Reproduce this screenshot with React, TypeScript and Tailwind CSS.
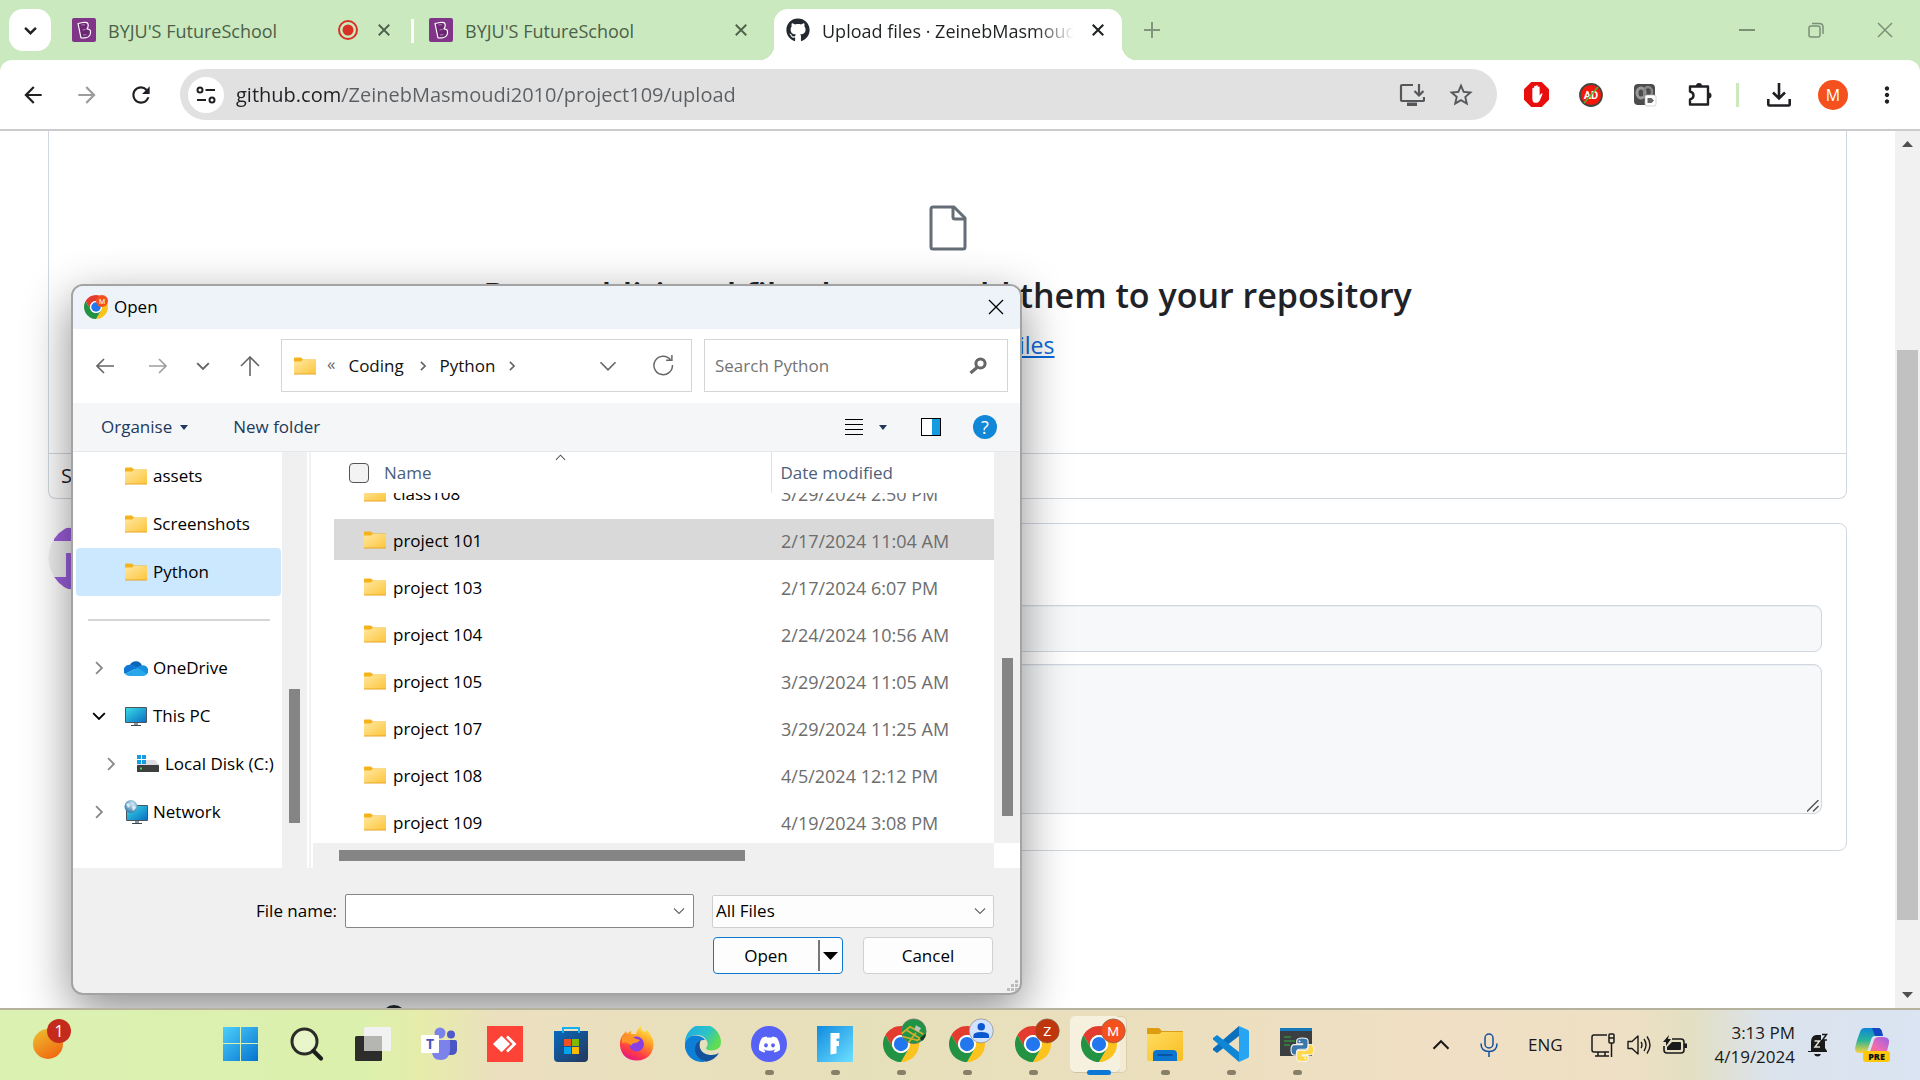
import React from "react";
import { FaDiscord, FaGithub } from "react-icons/fa";
import {
  MdArrowBack,
  MdArrowForward,
  MdRefresh,
  MdStarBorder,
  MdMoreVert,
} from "react-icons/md";

const ui = "font-['Open_Sans','Noto_Sans',sans-serif]";

/* ---------- Icons ---------- */

function Cross({ size, stroke = 1 }: { size: number; stroke?: number }) {
  return (
    <svg width={size} height={size} viewBox="0 0 16 16" fill="none" stroke="currentColor" strokeWidth={stroke} aria-hidden="true">
      <path d="M1 1 15 15M15 1 1 15" />
    </svg>
  );
}

function Chevron({ dir, size = 12, stroke = 1.5 }: { dir: "down" | "up" | "right"; size?: number; stroke?: number }) {
  const d = dir === "down" ? "M1 3.5 6 8.5 11 3.5" : dir === "up" ? "M1 8.5 6 3.5 11 8.5" : "M3.5 1 8.5 6 3.5 11";
  return (
    <svg width={size} height={size} viewBox="0 0 12 12" fill="none" stroke="currentColor" strokeWidth={stroke} aria-hidden="true" className="shrink-0">
      <path d={d} />
    </svg>
  );
}

function Caret({ width, height }: { width: number; height: number }) {
  return (
    <svg width={width} height={height} viewBox="0 0 10 6" preserveAspectRatio="none" fill="currentColor" aria-hidden="true">
      <path d="M0 0H10L5 6Z" />
    </svg>
  );
}

function ByjuIcon() {
  return (
    <svg width="24" height="24" viewBox="0 0 24 24" aria-hidden="true" className="shrink-0">
      <rect width="24" height="24" rx="2" fill="#813588" />
      <path
        d="M6 5.5 11 4.5Q16 3.500 16.200 7Q16.400 9.500 15 10.800Q19 11 18.500 15Q18 19.500 13 19.800L9 20Z"
        fill="#6b2772"
        stroke="#fff"
        strokeWidth="1.200"
        strokeLinejoin="round"
      />
      <path d="M9.500 7 13 6.700M11 17 14.500 16.700M10.500 12 13.500 11.500" stroke="#c79acb" strokeWidth=".8" />
    </svg>
  );
}

function Chrome({ size, badge }: { size: number; badge?: React.ReactNode }) {
  return (
    <svg width={size} height={size} viewBox="0 0 48 48" className="shrink-0 overflow-visible" aria-hidden="true">
      <path fill="#e33b2e" d="M24 12h20.780A24 24 0 0 0 3.216 12.002L13.608 30A12 12 0 0 1 24 12z" />
      <path fill="#fcc31e" d="M34.391 30.003 24 48a24 24 0 0 0 20.780-36.002H24A12 12 0 0 1 34.391 30.003z" />
      <path fill="#229342" d="M13.609 30.003 3.218 12.006A24 24 0 0 0 24.002 48L34.393 30.003a12 12 0 0 1-20.784 0z" />
      <circle cx="24" cy="24" r="12" fill="#fff" />
      <circle cx="24" cy="24" r="9.500" fill="#2377ee" />
      {badge}
    </svg>
  );
}

function LetterBadge({ letter, color }: { letter: string; color: string }) {
  return (
    <g>
      <circle cx="43" cy="6.500" r="16" fill={color} stroke="#8a5f4c" strokeWidth="1" />
      <text x="43" y="13" textAnchor="middle" fontSize="18" fill="#fff" fontFamily="Roboto, sans-serif">
        {letter}
      </text>
    </g>
  );
}

function FolderIcon() {
  return (
    <svg width="22" height="18" viewBox="0 0 22 18" aria-hidden="true" className="shrink-0">
      <defs>
        <linearGradient id="folder" x1="0" y1="0" x2="1" y2="1">
          <stop offset="0" stopColor="#ffe7a0" />
          <stop offset="1" stopColor="#fdc63c" />
        </linearGradient>
      </defs>
      <path d="M0 1.500Q0 .5 1 .5H7L9 2.500H22V8H0z" fill="#f6b21b" />
      <path d="M0 4.500H7L8.500 3H22V17H0z" fill="url(#folder)" />
      <path d="M0 16.500H22V17.500H0z" fill="#e9a524" />
    </svg>
  );
}

function OneDriveIcon() {
  return (
    <svg width="24" height="16" viewBox="0 0 24 16" aria-hidden="true" className="shrink-0">
      <path d="M6 5A6.500 6.500 0 0 1 18 5.500L12 10z" fill="#0a64b8" />
      <path d="M6 4.800A5.600 5.600 0 0 0 1 14L14 7.500Q10 4.200 6 4.800z" fill="#0f78d4" />
      <path d="M18 5.500A5.200 5.200 0 0 1 22.500 14.500L12.500 8Q15 5.300 18 5.500z" fill="#1490df" />
      <path d="M1 14Q3 16 5.500 16H19Q21.500 16 23 14L13.500 7.800z" fill="#28a8ea" />
    </svg>
  );
}

function MonitorIcon({ globe = false }: { globe?: boolean }) {
  return (
    <svg width="24" height="24" viewBox="0 0 24 24" aria-hidden="true" className="shrink-0">
      <defs>
        <linearGradient id="screen" x1="0" y1="0" x2="1" y2="1">
          <stop offset="0" stopColor="#38dbe6" />
          <stop offset="1" stopColor="#0b6fc4" />
        </linearGradient>
        <radialGradient id="globe" cx=".6" cy=".3" r=".8">
          <stop offset="0" stopColor="#cfe9f7" />
          <stop offset="1" stopColor="#256fa3" />
        </radialGradient>
      </defs>
      <g transform={globe ? "translate(1 3)" : "translate(0 1)"}>
        <rect x="1" y="2" width="22" height="16" rx="1" fill="#4a5560" />
        <rect x="2" y="3" width="20" height="14" fill="url(#screen)" />
        <path d="M10 18h4v2h-4z" fill="#8b959e" />
        <path d="M7 20h10v1H7z" fill="#3c464e" />
      </g>
      {globe && (
        <g>
          <circle cx="7" cy="6.500" r="6.500" fill="url(#globe)" />
          <path d="M2 4 5 3 6 6 4 8zM8 7 11 5 12 8 9 11z" fill="#f0f8fb" opacity=".8" />
        </g>
      )}
    </svg>
  );
}

function DiskIcon() {
  return (
    <svg width="24" height="18" viewBox="0 0 24 18" aria-hidden="true" className="shrink-0">
      <path d="M5 5H19L23 10H1z" fill="#dcdee1" />
      <rect x="1" y="10" width="22" height="7" rx=".5" fill="#3d3f3e" />
      <rect x="4" y="12.500" width="2" height="2" fill="#3be14a" />
      <path d="M1 0h4v4H1zM6 0h4v4H6zM1 5h4v4H1zM6 5h4v4H6z" fill="#159de3" />
    </svg>
  );
}

/* ---------- Browser chrome ---------- */

function Tab({ title, recording = false }: { title: string; recording?: boolean }) {
  return (
    <div className="flex h-[42px] w-[348px] items-center px-3 text-[#4d5f49]">
      <ByjuIcon />
      <span className="ml-3 flex-1 truncate pt-px">{title}</span>
      {recording && (
        <svg width="22" height="22" viewBox="0 0 22 22" className="mr-[19px]" aria-label="Recording">
          <circle cx="11" cy="11" r="9" fill="none" stroke="#d93025" strokeWidth="2" />
          <circle cx="11" cy="11" r="5.500" fill="#d93025" />
        </svg>
      )}
      <button aria-label="Close tab" className="mr-1.5">
        <Cross size={12} stroke={2.4} />
      </button>
    </div>
  );
}

function TabStrip() {
  return (
    <div className="flex h-[60px] items-start bg-[#cae9bf] pt-[9px] pl-[9px] text-lg">
      <button aria-label="Search tabs" className="mr-[9px] flex h-[42px] w-[42px] items-center justify-center rounded-[14px] bg-white text-[#1f2320]">
        <Chevron dir="down" size={13} stroke={2.200} />
      </button>
      <Tab title="BYJU'S FutureSchool" recording />
      <span className="mx-[3px] mt-[10px] h-6 w-[3px] bg-white" />
      <Tab title="BYJU'S FutureSchool" />
      <div className="relative ml-[9px] flex h-[51px] w-[348px] items-start rounded-t-[14px] bg-white text-[#1f2320]">
        <span className="absolute bottom-0 -left-[14px] h-[14px] w-[14px] bg-[radial-gradient(circle_at_0_0,transparent_14px,white_14px)]" />
        <span className="absolute -right-[14px] bottom-0 h-[14px] w-[14px] bg-[radial-gradient(circle_at_100%_0,transparent_14px,white_14px)]" />
        <div className="flex h-[42px] w-full items-center px-3">
          <FaGithub size={24} className="shrink-0 text-[#24292f]" />
          <span className="mr-[18px] ml-3 flex-1 overflow-hidden mask-r-from-85% pt-px whitespace-nowrap">
            Upload files · ZeinebMasmoudi
          </span>
          <button aria-label="Close tab" className="mr-1.5">
            <Cross size={12} stroke={2.8} />
          </button>
        </div>
      </div>
      <button aria-label="New tab" className="ml-[22px] mt-[13px] text-[#82957c]">
        <svg width="16" height="16" viewBox="0 0 16 16" fill="none" stroke="currentColor" strokeWidth="2">
          <path d="M8 0V16M0 8H16" />
        </svg>
      </button>
      <div className="ml-auto flex h-[42px] items-center gap-[53px] pr-[27px] text-[#7c8f77]">
        <button aria-label="Minimize">
          <svg width="16" height="16" viewBox="0 0 16 16" stroke="currentColor" strokeWidth="2">
            <path d="M0 8H16" />
          </svg>
        </button>
        <button aria-label="Restore">
          <svg width="16" height="16" viewBox="0 0 16 16" fill="none" stroke="currentColor" strokeWidth="1.500">
            <rect x="1" y="4" width="11" height="11" rx="2" />
            <path d="M4 1.500H11Q15 1.500 15 5V12" />
          </svg>
        </button>
        <button aria-label="Close window">
          <Cross size={16} stroke={1.5} />
        </button>
      </div>
    </div>
  );
}

function Toolbar() {
  return (
    <div className="bg-[#cae9bf]">
      <div className="flex h-[71px] items-center rounded-t-[12px] border-b-2 border-[#cbcbcd] bg-white px-5 text-[#1f2023]">
        <button aria-label="Back">
          <MdArrowBack size={26} />
        </button>
        <button aria-label="Forward" className="ml-7 text-[#9c9c9e]">
          <MdArrowForward size={26} />
        </button>
        <button aria-label="Reload" className="ml-7">
          <MdRefresh size={26} />
        </button>
        <div className="ml-[26px] flex h-[51px] flex-1 items-center rounded-full bg-[#e1e1e1] pr-[22px] pl-2">
          <button aria-label="Site information" className="flex h-9 w-9 items-center justify-center rounded-full bg-white">
            <svg width="20" height="18" viewBox="0 0 20 18" fill="none" stroke="currentColor" strokeWidth="2">
              <circle cx="4" cy="4" r="2.500" />
              <path d="M9.500 4H19M1 14H10" />
              <circle cx="16" cy="14" r="2.500" />
            </svg>
          </button>
          <input
            aria-label="Address"
            className="ml-3 min-w-0 flex-1 bg-[linear-gradient(90deg,#1f2023_106px,#5c5f62_106px)] bg-clip-text text-[20px] text-transparent outline-none"
            defaultValue="github.com/ZeinebMasmoudi2010/project109/upload"
          />
          <button aria-label="Install app" className="text-[#55575a]">
            <svg width="26" height="24" viewBox="0 0 26 24" fill="none" stroke="currentColor" strokeWidth="2.200">
              <path d="M14 2H3Q2 2 2 3V17Q2 18 3 18H24Q25 18 25 17V14" />
              <path d="M20 1V12M15.500 8 20 12.500 24.500 8" />
              <path d="M8 19.500H18V23H8z" fill="currentColor" stroke="none" />
            </svg>
          </button>
          <button aria-label="Bookmark" className="ml-[22px] text-[#55575a]">
            <MdStarBorder size={28} />
          </button>
        </div>
        <div className="ml-[27px] flex items-center gap-[30px]">
          <button aria-label="Ad blocker">
            <svg width="25" height="25" viewBox="0 0 24 24">
              <path d="M7 0H17L24 7V17L17 24H7L0 17V7z" fill="#e80e0e" />
              <path
                d="M8 12V6.500Q8 5.500 8.800 5.500T9.700 6.500V4.500Q9.700 3.500 10.600 3.500T11.500 4.500V4Q11.500 3 12.400 3T13.300 4V5Q13.300 4.200 14.200 4.200T15 5.200V13L16.500 11Q17.500 10.500 17.800 11.500L15.500 17Q14.500 20 11.500 20Q8 20 8 16z"
                fill="#fff"
              />
            </svg>
          </button>
          <button aria-label="AD extension">
            <svg width="24" height="24" viewBox="0 0 24 24">
              <circle cx="12" cy="12" r="11" fill="#f3170c" stroke="#47443f" strokeWidth="1.800" />
              <text x="12" y="16" textAnchor="middle" fontSize="11" fontWeight="700" fill="#fff" fontFamily="Roboto, sans-serif">
                AD
              </text>
              <path d="M5 20 19 4" stroke="#3fbf3f" strokeWidth="1.300" />
            </svg>
          </button>
          <button aria-label="Screen capture extension">
            <svg width="24" height="24" viewBox="0 0 24 24">
              <rect x="1" y="1" width="21" height="21" rx="4" fill="#4c4c4c" />
              <ellipse cx="8" cy="10" rx="4" ry="5" fill="none" stroke="#999" strokeWidth="3" />
              <ellipse cx="15" cy="9" rx="4" ry="5" fill="none" stroke="#888" strokeWidth="2.500" />
              <rect x="12" y="12" width="11" height="11" rx="2" fill="#fff" stroke="#bbb" strokeWidth=".6" />
              <path d="M14.500 15H18.500L21 17.500 18.500 20H14.500z" fill="#666" />
            </svg>
          </button>
          <button aria-label="Extensions">
            <svg width="26" height="26" viewBox="0 0 26 26" fill="none" stroke="currentColor" strokeWidth="2.400" strokeLinejoin="round">
              <path d="M3 4.500H21V22.500H3V17.500Q6.500 16.500 6.500 13.500T3 9.500z" />
              <path d="M9 4A3 3 0 0 1 15 4zM21.500 10.500A3 3 0 0 1 21.500 16.500z" fill="currentColor" stroke="none" />
            </svg>
          </button>
        </div>
        <span className="ml-[23px] h-6 w-[3px] bg-[#cae9bf]" />
        <button aria-label="Downloads" className="ml-7">
          <svg width="24" height="24" viewBox="0 0 24 24" fill="none" stroke="currentColor" strokeWidth="2.600">
            <path d="M12 0V15M6 9.500 12 15.500 18 9.500M1.300 16V21.500Q1.300 22.500 2.300 22.500H21.700Q22.700 22.500 22.700 21.500V16" />
          </svg>
        </button>
        <button className="ml-[27px] flex h-[30px] w-[30px] items-center justify-center rounded-full bg-[#f4511e] text-base text-white">
          M
        </button>
        <button aria-label="Menu" className="ml-[26px]">
          <MdMoreVert size={26} />
        </button>
      </div>
    </div>
  );
}

/* ---------- Page ---------- */

function Page() {
  return (
    <main className="flex min-h-0 flex-1 bg-white text-[#1f2328]">
      <div className="flex min-w-0 flex-1 flex-col overflow-hidden px-12">
        <section className="shrink-0 rounded-b-lg border border-t-0 border-[#d0d7de]">
          <div className="flex h-[323px] flex-col items-center border-b border-[#d0d7de] pt-[74px]">
            <svg width="38" height="46" viewBox="0 0 38 46" fill="none" stroke="#656d76" strokeWidth="3" strokeLinejoin="round" aria-hidden="true">
              <path d="M4 2H25L36 13V42Q36 44 34 44H4Q2 44 2 42V4Q2 2 4 2z" />
              <path d="M24 2V12Q24 14 26 14H36" />
            </svg>
            <h3 className="mt-[20px] text-[34px] leading-[48px] font-semibold whitespace-nowrap">
              Drag additional files here to add them to your repository
            </h3>
            <p className="mt-[10px] text-[23px] leading-[32px] text-[#656d76]">
              Or{" "}
              <a href="#choose" className="text-[#0969da] underline">
                choose your files
              </a>
            </p>
          </div>
          <p className="h-[44px] px-3 text-[20px] leading-[44px]">S</p>
        </section>
        <form className="mt-6 flex shrink-0 items-start">
          <svg width="66" height="70" viewBox="0 0 66 70" className="shrink-0" aria-hidden="true">
            <clipPath id="avatar">
              <circle cx="35" cy="35" r="34.500" />
            </clipPath>
            <g clipPath="url(#avatar)">
              <rect width="70" height="70" fill="#f0f0f0" />
              <path d="M6 5H60V18H6zM18 30H48V66H6V54H18z" fill="#9a5fdb" />
            </g>
          </svg>
          <div className="ml-6 flex flex-1 flex-col rounded-lg border border-[#d0d7de] px-6 pt-[81px] pb-[36px]">
            <input
              aria-label="Commit summary"
              className="h-[47px] rounded-lg border border-[#d0d7de] bg-[#f6f8fa] px-4 text-lg shadow-[inset_0_1px_0_rgba(208,215,222,0.3)]"
            />
            <div className="relative mt-3 flex">
              <textarea
                aria-label="Extended description"
                className="h-[150px] flex-1 resize-none rounded-lg border border-[#d0d7de] bg-[#f6f8fa] p-4 text-lg shadow-[inset_0_1px_0_rgba(208,215,222,0.3)]"
              />
              <svg width="12" height="12" viewBox="0 0 12 12" className="absolute right-[3px] bottom-[2px]" stroke="#4f5255" strokeWidth="1.400" aria-hidden="true">
                <path d="M0 11.500 11.500 0M6 11.500 11.500 6" />
              </svg>
            </div>
          </div>
        </form>
        <div className="mt-[154px] ml-[334px] h-6 w-6 shrink-0 rounded-full bg-[#24292f]" />
      </div>
      <div className="flex w-[25px] flex-col items-center bg-[#f1f1f1] py-[10px] text-[#505050]" aria-hidden="true">
        <span className="flex rotate-180">
          <Caret width={11} height={6} />
        </span>
        <span className="mt-[203px] mb-auto h-[570px] w-[21px] bg-[#c1c1c1]" />
        <Caret width={11} height={6} />
      </div>
    </main>
  );
}

/* ---------- File dialog ---------- */

const files = [
  ["class108", "3/29/2024 2:50 PM"],
  ["project 101", "2/17/2024 11:04 AM"],
  ["project 103", "2/17/2024 6:07 PM"],
  ["project 104", "2/24/2024 10:56 AM"],
  ["project 105", "3/29/2024 11:05 AM"],
  ["project 107", "3/29/2024 11:25 AM"],
  ["project 108", "4/5/2024 12:12 PM"],
  ["project 109", "4/19/2024 3:08 PM"],
];

function TreeItem({
  label,
  icon,
  state,
  selected = false,
  nested = false,
}: {
  label: string;
  icon: React.ReactNode;
  state?: "open" | "closed";
  selected?: boolean;
  nested?: boolean;
}) {
  return (
    <li
      className={`mr-px ml-[3px] flex h-12 items-center rounded-sm whitespace-nowrap ${selected ? "bg-[#cce8ff]" : ""} ${nested ? "pl-7" : "pl-4"}`}
    >
      <span className="flex w-[14px] justify-center">
        {state === "open" && <Chevron dir="down" size={14} stroke={1.6} />}
        {state === "closed" && (
          <span className="text-[#8b8b8b]">
            <Chevron dir="right" size={14} stroke={1.6} />
          </span>
        )}
      </span>
      <span className="ml-[18px] flex w-6 justify-center">{icon}</span>
      <span className="ml-[5px]">{label}</span>
    </li>
  );
}

function FileDialog() {
  return (
    <div
      role="dialog"
      aria-label="Open"
      className="absolute top-[284px] left-[71px] flex w-[951px] flex-col overflow-hidden rounded-[12px] border-2 border-[#a3a3a3] bg-[#f0f0f0] text-[17px] text-black shadow-[0_16px_48px_rgba(0,0,0,0.45)]"
    >
      <div className="flex h-[43px] items-center bg-[#edf3f9] pr-4 pb-0.5 pl-[11px]">
        <Chrome
          size={24}
          badge={
            <g>
              <circle cx="36" cy="12" r="12" fill="#f4511e" />
              <text x="36" y="17" textAnchor="middle" fontSize="14" fill="#fff" fontFamily="Roboto, sans-serif">
                M
              </text>
            </g>
          }
        />
        <span className="ml-1.5 flex-1">Open</span>
        <button aria-label="Close">
          <Cross size={16} stroke={1.300} />
        </button>
      </div>

      <div className="flex h-[74px] items-center bg-white pr-3 pb-px text-[#666]">
        <button aria-label="Back" className="ml-[23px]">
          <svg width="18" height="16" viewBox="0 0 18 16" fill="none" stroke="currentColor" strokeWidth="1.600">
            <path d="M18 8H1M8 1 1 8 8 15" />
          </svg>
        </button>
        <button aria-label="Forward" className="ml-[35px] text-[#9f9f9f]">
          <svg width="18" height="16" viewBox="0 0 18 16" fill="none" stroke="currentColor" strokeWidth="1.600">
            <path d="M0 8H17M10 1 17 8 10 15" />
          </svg>
        </button>
        <button aria-label="Recent locations" className="ml-[29px]">
          <Chevron dir="down" size={14} stroke={1.700} />
        </button>
        <button aria-label="Up" className="ml-[30px]">
          <svg width="20" height="20" viewBox="0 0 20 20" fill="none" stroke="currentColor" strokeWidth="1.600">
            <path d="M10 20V1M1 10 10 1 19 10" />
          </svg>
        </button>
        <div className="ml-[21px] flex h-[53px] w-[411px] items-center border border-[#d5d5d5] pl-3">
          <FolderIcon />
          <span className="ml-[11px] pb-1">«</span>
          <span className="ml-[13px] w-[70px] text-[#111]">Coding</span>
          <Chevron dir="right" size={10} stroke={2} />
          <span className="ml-[11px] w-[62px] text-[#111]">Python</span>
          <span className="ml-1.5">
            <Chevron dir="right" size={10} stroke={2} />
          </span>
          <button aria-label="Previous locations" className="ml-auto">
            <Chevron dir="down" size={18} stroke={1.1} />
          </button>
          <button aria-label="Refresh" className="mr-[17px] ml-9">
            <svg width="21" height="21" viewBox="0 0 20 20" fill="none" stroke="currentColor" strokeWidth="1.400">
              <path d="M18.500 9.500A8.800 8.800 0 1 1 16.500 4.300M12.500 5H18V0" />
            </svg>
          </button>
        </div>
        <div className="ml-3 flex h-[53px] flex-1 items-center border border-[#d5d5d5] pr-[20px] pl-[10px]">
          <input aria-label="Search" placeholder="Search Python" className="min-w-0 flex-1 outline-none placeholder:text-[#747474]" />
          <svg width="18" height="18" viewBox="0 0 18 18" fill="none" stroke="currentColor" aria-hidden="true">
            <circle cx="11.500" cy="6.500" r="4.600" strokeWidth="3" />
            <path d="M8 10.500 1.500 16" strokeWidth="3" />
          </svg>
        </div>
      </div>

      <div className="flex h-[49px] items-center border-b border-[#e5e7e9] bg-[#f4f6f8] pr-[23px] pl-7 text-[#1e395b]">
        <button className="flex items-center gap-2">
          Organise
          <Caret width={8} height={5} />
        </button>
        <button className="ml-[45px] flex-1 text-left">New folder</button>
        <button aria-label="Change view" className="text-black">
          <svg width="18" height="18" viewBox="0 0 18 18" stroke="currentColor" strokeWidth="1">
            <path d="M0 1.500H18M0 6.500H18M0 11.500H18M0 16.500H18" />
          </svg>
        </button>
        <button aria-label="View options" className="ml-4">
          <Caret width={8} height={5} />
        </button>
        <button aria-label="Preview pane" className="ml-[34px]">
          <svg width="20" height="18" viewBox="0 0 20 18">
            <rect x=".5" y=".5" width="19" height="17" fill="#fff" stroke="#000" />
            <rect x="11" y="1" width="8" height="16" fill="#159be2" />
          </svg>
        </button>
        <button aria-label="Help" className="ml-8 flex h-6 w-6 items-center justify-center rounded-full bg-[#1187d8] text-lg text-white">
          ?
        </button>
      </div>

      <div className="flex h-[416px]">
        <nav className="w-[209px] bg-white" aria-label="Locations">
          <ul>
            <TreeItem label="assets" icon={<FolderIcon />} />
            <TreeItem label="Screenshots" icon={<FolderIcon />} />
            <TreeItem label="Python" icon={<FolderIcon />} selected />
          </ul>
          <hr className="mt-[23px] mr-3 mb-[23px] ml-[15px] border-t-2 border-[#d6d6d6]" />
          <ul>
            <TreeItem label="OneDrive" icon={<OneDriveIcon />} state="closed" />
            <TreeItem label="This PC" icon={<MonitorIcon />} state="open" />
            <TreeItem label="Local Disk (C:)" icon={<DiskIcon />} state="closed" nested />
            <TreeItem label="Network" icon={<MonitorIcon globe />} state="closed" />
          </ul>
        </nav>
        <div className="flex w-[25px] justify-center pt-[237px]">
          <span className="h-[134px] w-[11px] bg-[#858585]" />
        </div>
        <div className="w-1.5 border-r-2 border-white bg-white">
          <div className="ml-0.5 h-full w-0.5 bg-[#f2f2f2]" />
        </div>
        <div className="flex min-w-0 flex-1 flex-col">
          <div className="flex h-[391px]">
            <div className="relative flex-1 bg-white pl-[21px]">
              <span className="absolute top-0 left-[242px] text-[#555]">
                <Chevron dir="up" size={11} stroke={1.1} />
              </span>
              <table className="w-full table-fixed border-collapse text-left">
                <thead>
                  <tr className="h-[41px] text-[#4c607a]">
                    <th className="w-[437px] p-0 font-normal">
                      <label className="flex items-center pl-[15px]">
                        <input type="checkbox" className="mr-[15px] h-5 w-5 appearance-none rounded-[4px] border border-[#555] bg-[#f3f3f3]" />
                        Name
                      </label>
                    </th>
                    <th className="border-l border-[#e2e2e2] p-0 pl-[9px] font-normal">Date modified</th>
                  </tr>
                </thead>
                <tbody>
                  {files.map(([name, date], i) => (
                    <tr key={name}>
                      <td className="p-0">
                        <div className={`flex items-end overflow-hidden ${i === 0 ? "h-[23px]" : "h-[47px]"}`}>
                          <div className="flex h-[47px] flex-1 items-center">
                            <div className={`flex h-[41px] flex-1 items-center pl-[30px] ${i === 1 ? "bg-[#d9d9d9]" : ""}`}>
                              <FolderIcon />
                              <span className="ml-[7px] pt-0.5">{name}</span>
                            </div>
                          </div>
                        </div>
                      </td>
                      <td className="p-0 text-lg text-[#6d6d6d]">
                        <div className={`flex items-end overflow-hidden ${i === 0 ? "h-[23px]" : "h-[47px]"}`}>
                          <div className="flex h-[47px] flex-1 items-center">
                            <div className={`flex h-[41px] flex-1 items-center pt-0.5 pl-[10px] ${i === 1 ? "bg-[#d9d9d9]" : ""}`}>{date}</div>
                          </div>
                        </div>
                      </td>
                    </tr>
                  ))}
                </tbody>
              </table>
            </div>
            <div className="flex w-[26px] justify-center pt-[206px]">
              <span className="h-[158px] w-[11px] bg-[#858585]" />
            </div>
          </div>
          <div className="flex h-[25px] items-center">
            <div className="flex-1 pl-[26px]">
              <div className="h-[11px] w-[406px] bg-[#858585]" />
            </div>
            <span className="h-full w-[26px] bg-white" />
          </div>
        </div>
      </div>

      <form className="flex h-[125px] flex-col pt-[26px] pr-[26px]">
        <div className="flex items-center justify-end">
          <label htmlFor="file-name">File name:</label>
          <div className="ml-2 flex h-[34px] w-[349px] items-center rounded-xs border border-[#868686] bg-white pr-2 text-[#666]">
            <input id="file-name" className="min-w-0 flex-1 px-1 text-black outline-none" />
            <Chevron dir="down" size={12} stroke={1.1} />
          </div>
          <div className="relative ml-[18px] flex w-[282px] items-center text-[#666]">
            <select
              aria-label="File type"
              className="h-[33px] w-full appearance-none rounded-xs border border-[#cfcfcf] bg-[#fdfdfd] px-[3px] text-black"
            >
              <option>All Files</option>
            </select>
            <span className="pointer-events-none absolute right-2">
              <Chevron dir="down" size={12} stroke={1.1} />
            </span>
          </div>
        </div>
        <div className="mt-[9px] flex justify-end gap-5 pr-px">
          <div className="flex h-[37px] w-[130px] items-center rounded-[4px] border border-[#0a78d0] bg-[#fdfdfd]">
            <button type="button" className="flex-1">
              Open
            </button>
            <button type="button" aria-label="Open options" className="flex h-[31px] w-6 items-center border-l-2 border-[#777] pl-[3px]">
              <Caret width={15} height={8} />
            </button>
          </div>
          <button type="button" className="h-[37px] w-[130px] rounded-[4px] border border-[#d0d0d0] bg-[#fdfdfd]">
            Cancel
          </button>
        </div>
      </form>
      <svg width="11" height="11" viewBox="0 0 11 11" className="absolute right-[2px] bottom-[2px]" fill="#bcbcbc" aria-hidden="true">
        <path d="M8 0h3v3H8zM4 4h3v3H4zM8 4h3v3H8zM0 8h3v3H0zM4 8h3v3H4zM8 8h3v3H8z" />
      </svg>
    </div>
  );
}

/* ---------- Taskbar ---------- */

const StartIcon = (
  <svg width="36" height="36" viewBox="0 0 36 36">
    <defs>
      <linearGradient id="win" x1="0" y1="0" x2="1" y2="1" gradientUnits="objectBoundingBox">
        <stop offset="0" stopColor="#4cd0fb" />
        <stop offset="1" stopColor="#0672d0" />
      </linearGradient>
    </defs>
    <path d="M0 1H17V17H0zM18 1H35V17H18zM0 18H17V35H0zM18 18H35V35H18z" fill="url(#win)" />
  </svg>
);

const SearchIcon = (
  <svg width="36" height="36" viewBox="0 0 36 36" fill="none">
    <circle cx="15.500" cy="15.500" r="12.500" fill="#fff" fillOpacity=".35" stroke="#2b2c29" strokeWidth="3" />
    <path d="M24.500 25 32 32.500" stroke="#1d1e1c" strokeWidth="4.200" strokeLinecap="round" />
  </svg>
);

const TaskViewIcon = (
  <svg width="36" height="36" viewBox="0 0 36 36">
    <rect x="0" y="10" width="27" height="25" rx="1.500" fill="#2d2d2b" />
    <rect x="9" y="1" width="27" height="24" rx="1.500" fill="#f2f2f2" />
    <rect x="9" y="10" width="18" height="15" fill="#b5b5b2" />
  </svg>
);

const TeamsIcon = (
  <svg width="36" height="36" viewBox="0 0 36 36">
    <circle cx="19" cy="7" r="5.500" fill="#7b83eb" />
    <circle cx="30" cy="8.500" r="4" fill="#5059c9" />
    <path d="M25 14H34Q36 14 36 16V24Q36 29 30 29H25z" fill="#4c55c4" />
    <path d="M11 14H28Q29 14 29 15V25Q28 34 19.500 34T11 25z" fill="#7b83eb" />
    <rect x="0" y="9" width="18" height="18" rx="1" fill="#fff" />
    <text x="9" y="23" textAnchor="middle" fontSize="14" fontWeight="700" fill="#4b53bc" fontFamily="Open Sans, sans-serif">
      T
    </text>
  </svg>
);

const AnyDeskIcon = (
  <svg width="36" height="36" viewBox="0 0 36 36">
    <path d="M0 0H36V36H0z" fill="#fd4238" />
    <path d="M6 18 14.500 9.800 23 18 14.500 26.200z" fill="#fff" />
    <path d="M20 10.500 27.500 18 20 25.500" fill="none" stroke="#fff" strokeWidth="2.800" />
  </svg>
);

const StoreIcon = (
  <svg width="36" height="36" viewBox="0 0 36 36">
    <defs>
      <linearGradient id="store" x1="0" y1="0" x2="1" y2="1">
        <stop offset="0" stopColor="#0869bd" />
        <stop offset="1" stopColor="#26375c" />
      </linearGradient>
    </defs>
    <path d="M1 5H35V32Q35 36 31 36H5Q1 36 1 32z" fill="url(#store)" />
    <path d="M10 7V2H26V7" fill="none" stroke="#17aef3" strokeWidth="2" />
    <path d="M11 13h7v7h-7z" fill="#f25022" />
    <path d="M19 13h7v7h-7z" fill="#7fba00" />
    <path d="M11 21h7v7h-7z" fill="#00a4ef" />
    <path d="M19 21h7v7h-7z" fill="#ffb900" />
  </svg>
);

const FirefoxIcon = (
  <svg width="36" height="36" viewBox="0 0 36 36">
    <defs>
      <linearGradient id="fox" x1=".8" y1="0" x2=".3" y2="1">
        <stop offset="0" stopColor="#fff24a" />
        <stop offset=".4" stopColor="#ff9a26" />
        <stop offset=".75" stopColor="#ff3c45" />
        <stop offset="1" stopColor="#e31587" />
      </linearGradient>
    </defs>
    <path d="M3 10 7 5 8 8Q10 5.500 12.500 5L12 8 17 8Q18 3 22 0Q22 4 25 6Q28 4 28 4Q35 12 34.500 19Q33 34 18 34.500Q3 34 1 20Q.5 14 3 10z" fill="url(#fox)" />
    <circle cx="17.500" cy="18" r="7.500" fill="#8a3fe0" />
    <path d="M3 11Q7 9 12 9L16 12.500 21 14Q19 17 15 17Q12 18 12 20Q9 15 3 17z" fill="#ff9326" />
  </svg>
);

const EdgeIcon = (
  <svg width="36" height="36" viewBox="0 0 36 36">
    <defs>
      <linearGradient id="edgeTop" x1="0" y1="0" x2="1" y2=".5">
        <stop offset="0" stopColor="#1ba8e6" />
        <stop offset=".6" stopColor="#2bc3c9" />
        <stop offset="1" stopColor="#62dc50" />
      </linearGradient>
    </defs>
    <path d="M0 17A18 18 0 0 1 36 16Q36 24 27 24.500Q21 24.500 21 22Q23 20 22.500 17Q20 8 10 9Q3 10 0 17z" fill="url(#edgeTop)" />
    <path d="M0 17Q3 9 11 9.500Q18 10 20 14Q13 13 11 20Q9 28 17 33L20 36Q4 37 0 22z" fill="#0d7fd6" />
    <path d="M16 14Q9 17 10 25Q12 33 21 35.800Q30 34 34 27Q30 29.500 25 29Q17 28 15 22Q14 17 16 14z" fill="#12519b" />
  </svg>
);

const DiscordIcon = (
  <span className="flex h-9 w-9 items-center justify-center rounded-full bg-[#5661f5] text-white">
    <FaDiscord size={23} />
  </span>
);

const FortniteIcon = (
  <svg width="36" height="36" viewBox="0 0 36 36">
    <defs>
      <linearGradient id="fn" x1="0" y1="0" x2="1" y2="1">
        <stop offset="0" stopColor="#0f8be0" />
        <stop offset="1" stopColor="#6fe0ff" />
      </linearGradient>
    </defs>
    <path d="M0 0H36V36H0z" fill="url(#fn)" />
    <path d="M13.500 7H22.500V12.500H19.500V15H22V20H19.500V27.500L13.500 28.500z" fill="#fff" />
  </svg>
);

const ExplorerIcon = (
  <svg width="36" height="36" viewBox="0 0 36 36">
    <defs>
      <linearGradient id="exp" x1="0" y1="0" x2="1" y2="1">
        <stop offset="0" stopColor="#ffdb60" />
        <stop offset="1" stopColor="#f9be22" />
      </linearGradient>
    </defs>
    <path d="M0 3Q0 2 1 2H12L15 5H35Q36 5 36 6V14H0z" fill="#dd9d10" />
    <path d="M0 8H12L15 6H36V33Q36 35 34 35H2Q0 35 0 33z" fill="url(#exp)" />
    <path d="M6 35V28Q6 24 10 24H26Q30 24 30 28V35z" fill="#0c75cf" />
    <path d="M10.500 29H25.500" stroke="#0a4c95" strokeWidth="1.600" />
  </svg>
);

const VsCodeIcon = (
  <svg width="36" height="36" viewBox="0 0 36 36">
    <path d="M26 0 35 4Q36 4.500 36 6V30Q36 31.500 35 32L26 36z" fill="#27a4f2" />
    <path d="M26 0V10L4 27 0 24V22.500z" fill="#0a70bd" />
    <path d="M26 36V26L4 9 0 12V13.500z" fill="#0d86d6" />
  </svg>
);

const snake =
  "M12 0C6.500 0 6 2.200 6 3.200V6H12.200V7H3.500C1.500 7 0 8.500 0 12.400S1.500 18 3.500 18H5.800V15Q5.800 11.800 9 11.800H15Q18 11.800 18 8.800V3.200C18 1.200 16.500 0 12 0z";

const IdleIcon = (
  <svg width="36" height="36" viewBox="0 0 36 36">
    <rect x="1" y="2" width="32" height="28" fill="#3b3f42" />
    <rect x="1" y="2" width="32" height="3" fill="#1478bd" />
    <path d="M5 11H12M5 15H16M5 19H11" stroke="#3a8a42" strokeWidth="1.500" />
    <g transform="translate(12 12) scale(.95)" stroke="#f3f1e8" strokeWidth="1.200">
      <path d={snake} fill="#3a76ab" />
      <path d={snake} fill="#ffd848" transform="rotate(180 12 12.400)" />
      <circle cx="9" cy="3.500" r="1" fill="#fff" stroke="none" />
      <circle cx="15" cy="21.300" r="1" fill="#fff" stroke="none" />
    </g>
  </svg>
);

const apps: { name: string; icon: React.ReactNode; mark?: "running" | "active" }[] = [
  { name: "Start", icon: StartIcon },
  { name: "Search", icon: SearchIcon },
  { name: "Task View", icon: TaskViewIcon },
  { name: "Teams", icon: TeamsIcon },
  { name: "AnyDesk", icon: AnyDeskIcon },
  { name: "Store", icon: StoreIcon },
  { name: "Firefox", icon: FirefoxIcon },
  { name: "Edge", icon: EdgeIcon },
  { name: "Discord", icon: DiscordIcon, mark: "running" },
  { name: "Fortnite", icon: FortniteIcon, mark: "running" },
  {
    name: "Chrome profile 1",
    mark: "running",
    icon: (
      <Chrome
        size={36}
        badge={
          <g>
            <circle cx="41" cy="7" r="16.500" fill="#1f9445" stroke="#777" strokeWidth="1" />
            <path d="M25 10 36 1 54 11M26 14 46 19 55 13M32 6 50 17M34 22 44 9" stroke="#d3ad2c" strokeWidth="2.200" fill="none" />
            <path d="M44 -1 51 3 47 8 42 4z" fill="#b9c6bd" />
            <path d="M49 16 57 10Q57 16 52 20z" fill="#143d22" />
          </g>
        }
      />
    ),
  },
  {
    name: "Chrome profile 2",
    mark: "running",
    icon: (
      <Chrome
        size={36}
        badge={
          <g>
            <circle cx="43" cy="6.500" r="16" fill="#d3e3fd" stroke="#8d8d8d" strokeWidth="1" />
            <circle cx="43" cy="1" r="5" fill="#0b57d0" />
            <path d="M32.500 16V13Q32.500 8 43 8T53.500 13V16z" fill="#0b57d0" />
          </g>
        }
      />
    ),
  },
  { name: "Chrome profile Z", mark: "running", icon: <Chrome size={36} badge={<LetterBadge letter="Z" color="#bf360c" />} /> },
  { name: "Chrome profile M", mark: "active", icon: <Chrome size={36} badge={<LetterBadge letter="M" color="#f4511e" />} /> },
  { name: "File Explorer", icon: ExplorerIcon, mark: "running" },
  { name: "Visual Studio Code", icon: VsCodeIcon, mark: "running" },
  { name: "Python IDLE", icon: IdleIcon, mark: "running" },
];

function Taskbar() {
  return (
    <footer className="flex h-[72px] items-stretch border-t-2 border-[#b5b29d] bg-[linear-gradient(90deg,#dbf1b2_0%,#dcf0ad_19%,#e6ecaa_22%,#ebdfbf_26%,#e6e0ba_45%,#eadfbd_58%,#f0dfc4_75%,#eee0c4_85%,#e3dfc2_88%,#dbe3ec_92%,#dae4f2_100%)] text-[#1a1a1a]">
      <button aria-label="Widgets" className="flex w-[208px] items-center pl-8">
        <svg width="40" height="54" viewBox="0 0 40 54">
          <defs>
            <linearGradient id="sun" x1="0" y1="0" x2=".6" y2="1">
              <stop offset="0" stopColor="#eec22f" />
              <stop offset="1" stopColor="#f06b12" />
            </linearGradient>
          </defs>
          <circle cx="16" cy="26" r="15" fill="url(#sun)" />
          <circle cx="27" cy="13" r="12" fill="#c42b1c" />
          <text x="27" y="19" textAnchor="middle" fontSize="16" fill="#fff" fontFamily="Open Sans, sans-serif">
            1
          </text>
        </svg>
      </button>
      <div className="flex">
        {apps.map((app) => (
          <button key={app.name} aria-label={app.name} className="relative flex w-[66px] items-center justify-center pb-0.5">
            {app.mark === "active" && (
              <>
                <span className="absolute top-[6px] left-[7px] h-[57px] w-[54px] rounded-[5px] border border-[#dccfae] bg-[#f3ead3]" />
                <span className="absolute top-[6px] left-[4px] h-[57px] w-[50px] rounded-[5px] border-b border-[#cfc4a8] bg-[#f6f0df]" />
              </>
            )}
            <span className="relative">{app.icon}</span>
            {app.mark === "running" && <span className="absolute bottom-[5px] h-[5px] w-[9px] rounded-full bg-[#868069]" />}
            {app.mark === "active" && <span className="absolute bottom-[5px] h-[5px] w-6 rounded-full bg-[#0a78d4]" />}
          </button>
        ))}
      </div>
      <div className="ml-auto flex items-center pr-[30px] pb-px">
        <button aria-label="Hidden icons">
          <Chevron dir="up" size={18} stroke={1.4} />
        </button>
        <button aria-label="Microphone" className="ml-[30px] text-[#14509c]">
          <svg width="18" height="24" viewBox="0 0 18 24" fill="none" stroke="currentColor" strokeWidth="1.500">
            <rect x="5" y="1" width="8" height="14" rx="4" />
            <path d="M1 10.500Q1 18.500 9 18.500T17 10.500M9 18.500V24" />
          </svg>
        </button>
        <span className="ml-[30px] w-[37px] text-[17px]">ENG</span>
        <button aria-label="System status" className="ml-[26px] flex items-center gap-3">
          <svg width="24" height="24" viewBox="0 0 24 24" fill="none" stroke="currentColor" strokeWidth="1.500">
            <path d="M16 2H3Q1 2 1 4V17Q1 19 3 19H18M7 19V23M14 19V23M4 23H18" />
            <path d="M18 2Q18 1 19 1H22Q23 1 23 2V9Q23 10 22 10H19Q18 10 18 9zM18 5H23M20.500 10V24" />
          </svg>
          <svg width="24" height="22" viewBox="0 0 24 22" fill="none" stroke="currentColor" strokeWidth="1.400">
            <path d="M1 7.500H5L11 2V20L5 14.500H1z" strokeLinejoin="round" />
            <path d="M14 8Q16 11 14 14M17 5Q21 11 17 17M20 2.500Q26 11 20 19.500" />
          </svg>
          <svg width="24" height="20" viewBox="0 0 24 20" fill="none" stroke="currentColor" strokeWidth="1.600">
            <path d="M9 4H18Q21 4 21 7V15Q21 18 18 18H4Q1 18 1 15V11" />
            <path d="M4 15V12L9 7H17Q18 7 18 8V14Q18 15 17 15zM21 8.500H24V13H21zM6 0 0 7H3V11L8 4H5z" fill="currentColor" stroke="none" />
          </svg>
        </button>
        <div className="ml-2 w-[100px] text-right text-[17px] leading-6">
          <div>3:13 PM</div>
          <div>4/19/2024</div>
        </div>
        <button aria-label="Notifications" className="ml-[13px]">
          <svg width="20" height="24" viewBox="0 0 20 24" fill="currentColor">
            <path d="M3 18V9Q3 3 8 2H13V7H17V15L19 18V19H0V18zM6 21H13Q12 23.500 9.500 23.500T6 21z" />
            <path d="M6.500 8H11.500L7 14H12" fill="none" stroke="#e4e4d8" strokeWidth="1.500" />
            <path d="M14 1.500H18.500L14.500 7H19" fill="none" stroke="currentColor" strokeWidth="1.500" />
          </svg>
        </button>
        <button aria-label="Copilot" className="ml-[27px]">
          <svg width="35" height="36" viewBox="0 0 35 36">
            <defs>
              <linearGradient id="cop1" x1="0" y1="0" x2="0" y2="1">
                <stop offset="0" stopColor="#0f86d8" />
                <stop offset=".5" stopColor="#2bb59a" />
                <stop offset="1" stopColor="#ffd23a" />
              </linearGradient>
              <linearGradient id="cop2" x1="1" y1="0" x2="0" y2="1">
                <stop offset="0" stopColor="#9b5fe8" />
                <stop offset=".6" stopColor="#f06bb0" />
                <stop offset="1" stopColor="#f77a4a" />
              </linearGradient>
            </defs>
            <path d="M10 1H23Q26 1 27 5L28 9H20Q17 9 16 13L13 22Q12 26 8 26H4Q0 26 0 21Q2 12 5 5Q6 1 10 1z" fill="url(#cop1)" />
            <path d="M17 1H23Q26 1 27 5L28 9H20z" fill="#1347c4" />
            <path d="M28 10Q35 10 34 16L32 24Q31 27 26 27H12Q15 26 16 22L19 13Q20 10 24 10z" fill="url(#cop2)" />
            <rect x="8" y="24" width="27" height="11" rx="3" fill="#fdc70c" />
            <text x="21.500" y="33" textAnchor="middle" fontSize="9" fontWeight="800" fill="#111" fontFamily="Open Sans, sans-serif">
              PRE
            </text>
          </svg>
        </button>
      </div>
    </footer>
  );
}

export default function App() {
  return (
    <div className={`${ui} flex h-screen flex-col overflow-hidden`}>
      <div className="relative flex min-h-0 flex-1 flex-col overflow-hidden">
        <TabStrip />
        <Toolbar />
        <Page />
        <FileDialog />
      </div>
      <Taskbar />
    </div>
  );
}
